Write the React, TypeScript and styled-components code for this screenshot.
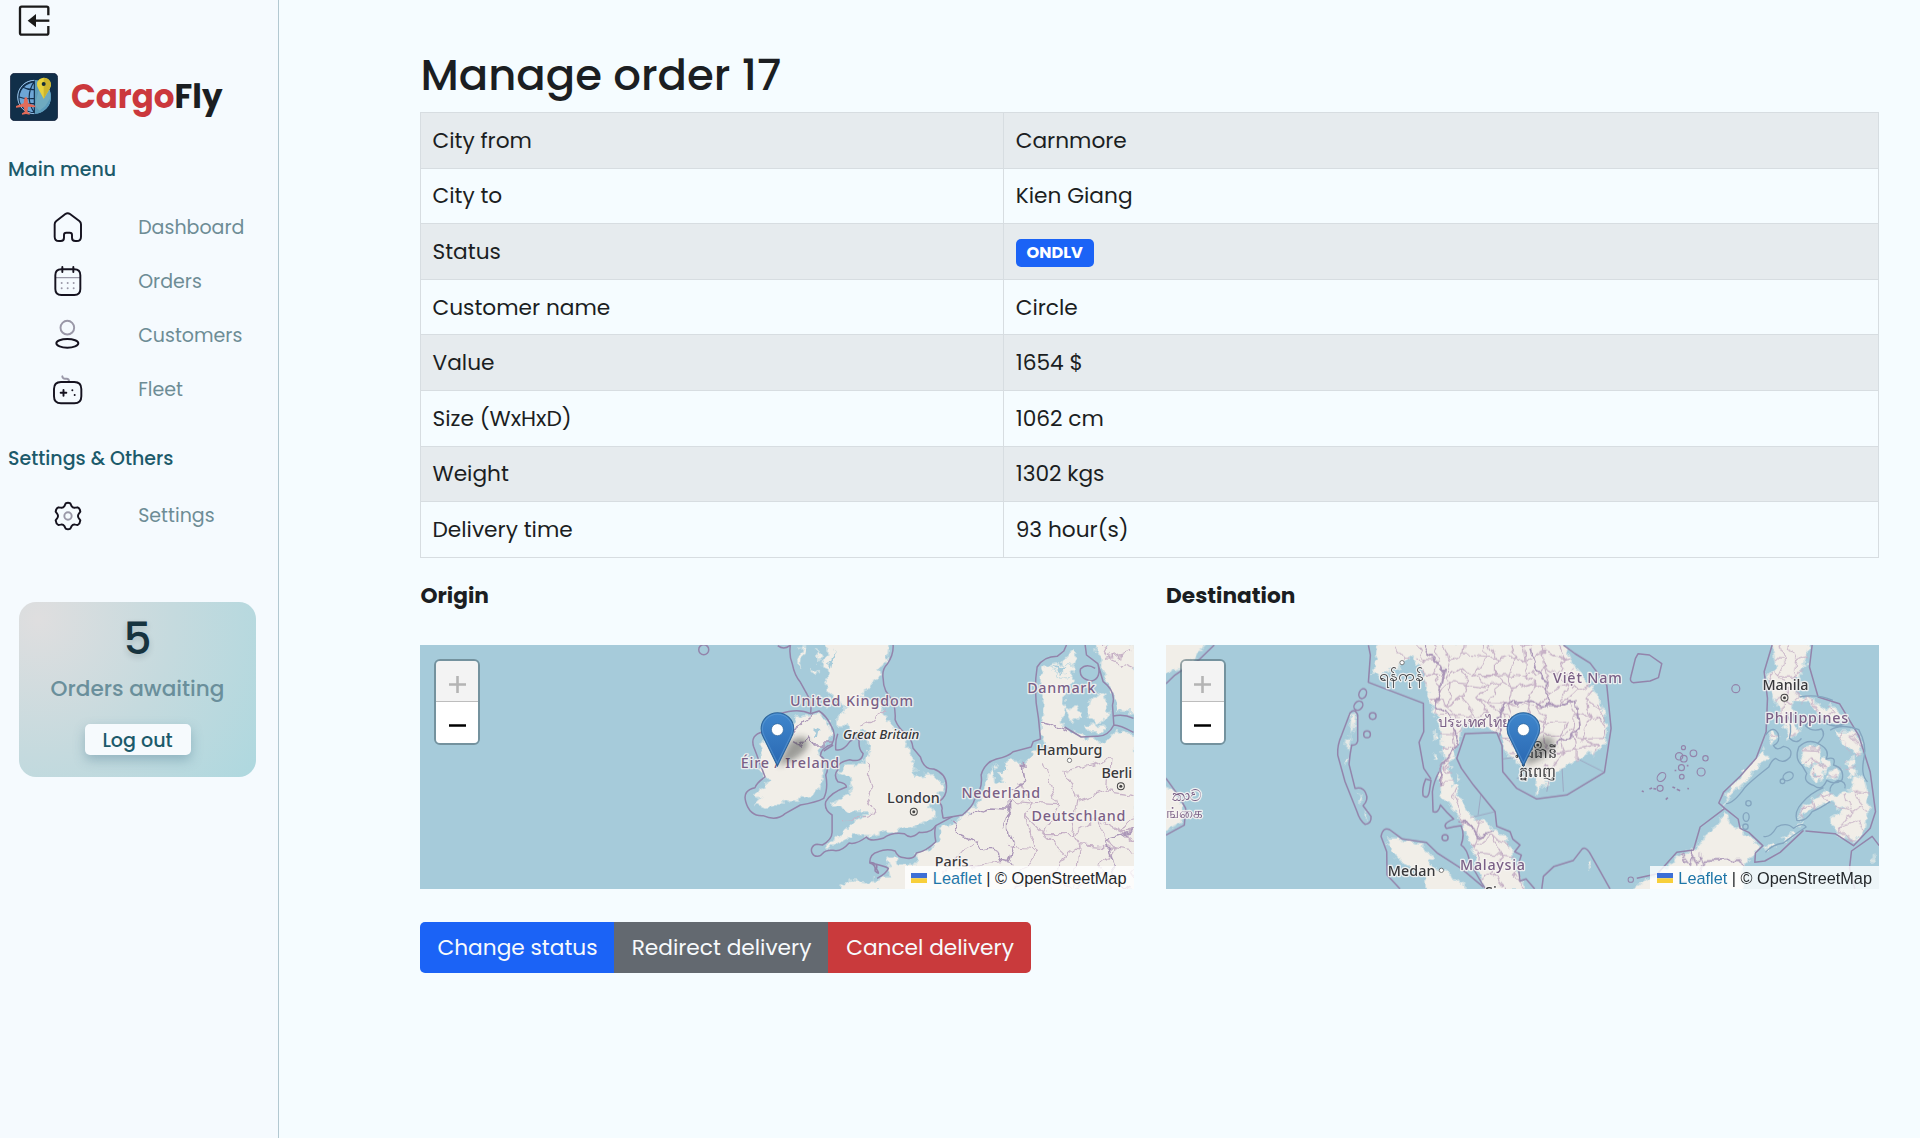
import React from "react";
import styled, { createGlobalStyle } from "styled-components";

const GlobalStyle = createGlobalStyle`
  *, *::before, *::after { box-sizing: border-box; }
  body {
    margin: 0;
    background: #f5fcff;
    color: #1b1e22;
    font-family: "Poppins", "Inter", "Noto Sans", sans-serif;
    font-size: 21.7px;
    line-height: 1.5;
  }
`;

const Shell = styled.div`
  display: flex;
  min-height: 1138px;
`;

/* ---------- sidebar ---------- */

const Sidebar = styled.aside`
  width: 279px;
  flex: none;
  display: flex;
  flex-direction: column;
  background: #f5fafe;
  border-right: 1px solid #b3c8d1;
`;

const Toggle = styled.button`
  display: flex;
  width: 36px;
  height: 42px;
  margin: 0 0 31px 17px;
  padding: 3px 0 0;
  border: 0;
  background: none;
`;

const Brand = styled.div`
  display: flex;
  align-items: center;
  gap: 13px;
  height: 48px;
  padding-left: 10px;
  font-size: 32.5px;
  font-weight: 700;
  line-height: 48px;
  color: #1b1e22;
`;

const BrandAccent = styled.span`
  color: #cb383c;
`;

const SectionLabel = styled.h2<{ $top: number }>`
  margin: ${(p) => p.$top}px 0 16px 8px;
  font-size: 19px;
  font-weight: 500;
  line-height: 28px;
  color: #1c5a6b;
`;

const NavList = styled.nav`
  display: flex;
  flex-direction: column;
`;

const NavLink = styled.a`
  display: flex;
  align-items: center;
  gap: 54.5px;
  height: 54.2px;
  padding-left: 51.7px;
  font-size: 19px;
  color: #6d8c95;
`;

const NavText = styled.span`
  padding-top: 1.5px;
`;

const AwaitingCard = styled.section`
  display: flex;
  flex-direction: column;
  align-items: center;
  width: 237px;
  height: 175px;
  margin: 59px 0 0 19px;
  border-radius: 17px;
  background: radial-gradient(circle at 8% 10%, #dfdedf 0%, #c5dade 50%, #aed8df 100%);
`;

const AwaitingCount = styled.strong`
  margin-top: 7px;
  font-size: 44px;
  font-weight: 500;
  line-height: 60px;
  color: #17343f;
  text-shadow: 0 3px 6px rgba(23, 52, 63, 0.18);
`;

const AwaitingLabel = styled.span`
  margin-top: 4px;
  font-size: 21.6px;
  font-weight: 500;
  line-height: 32px;
  color: #6a8f9b;
`;

const LogoutButton = styled.button`
  margin-top: 19px;
  width: 106px;
  height: 31.5px;
  padding: 1px 0 0;
  border: 0;
  border-radius: 5px;
  background: #f6fafd;
  box-shadow: 0 5px 12px rgba(60, 110, 135, 0.35);
  font: 500 19.1px/31px "Poppins", "Inter", sans-serif;
  color: #1c5a6b;
`;

/* ---------- main ---------- */

const Main = styled.main`
  flex: 1;
  min-width: 0;
  padding: 49px 41px 0 141px;
`;

const Title = styled.h1`
  margin: 0 0 11px 0.5px;
  font-size: 43.4px;
  font-weight: 500;
  line-height: 52px;
`;

const DetailTable = styled.table`
  width: 100%;
  border-collapse: collapse;
  table-layout: fixed;
`;

const DetailRow = styled.tr`
  height: 55.6px;
  &:nth-child(odd) { background: #e6ebee; }
`;

const DetailCell = styled.td<{ $width?: string }>`
  width: ${(p) => p.$width ?? "auto"};
  padding: 1.5px 11px 0 11.5px;
  border: 1px solid #d7dde1;
  color: #1b1e22;
  vertical-align: middle;
`;

const Badge = styled.span`
  display: block;
  width: 78px;
  height: 28px;
  margin-top: 2px;
  border-radius: 5px;
  background: #1b63f6;
  color: #fff;
  font-size: 16.2px;
  font-weight: 700;
  line-height: 28.5px;
  text-align: center;
`;

const MapGrid = styled.div`
  display: grid;
  grid-template-columns: 1fr 1fr;
  gap: 32px;
  margin-top: 22px;
`;

const MapTitle = styled.h3`
  margin: 0 0 33px 0.5px;
  font-size: 21.7px;
  font-weight: 700;
  line-height: 32px;
`;

const MapFrame = styled.div`
  position: relative;
  height: 244px;
  overflow: hidden;
  background: #a6cbda;
`;

const MapCanvas = styled.svg`
  display: block;
  width: 100%;
  height: 100%;
`;

const ZoomControl = styled.div`
  position: absolute;
  top: 14px;
  left: 14px;
  width: 46px;
  height: 86.5px;
  border: 2.5px solid rgba(80, 105, 115, 0.58);
  border-radius: 6px;
  overflow: hidden;
`;

const ZoomButton = styled.button<{ $disabled?: boolean }>`
  display: grid;
  place-items: center;
  width: 100%;
  height: 41px;
  padding: 7px 0 0;
  border: 0;
  border-bottom: ${(p) => (p.$disabled ? "1px solid #bdbdbd" : "0")};
  background: ${(p) => (p.$disabled ? "#f3f3f3" : "#fff")};
  color: ${(p) => (p.$disabled ? "#b4b4b4" : "#000")};
`;

const Attribution = styled.div`
  position: absolute;
  right: 0;
  bottom: 0;
  display: flex;
  align-items: center;
  height: 23px;
  padding: 1px 7px 0 6.5px;
  background: rgba(255, 255, 255, 0.8);
  font: 16.3px/22px "Liberation Sans", Arial, sans-serif;
  color: #24282b;
  white-space: pre;
`;

const LeafletLink = styled.a`
  display: flex;
  align-items: center;
  gap: 5.5px;
  color: #1f76a8;
`;

const ButtonGroup = styled.div`
  display: inline-flex;
  height: 51px;
  margin-top: 33px;
  border-radius: 5px;
  overflow: hidden;
`;

const ActionButton = styled.button<{ $color: string; $width: number }>`
  width: ${(p) => p.$width}px;
  padding: 0 0 0 1px;
  border: 0;
  background: ${(p) => p.$color};
  color: #f7fafc;
  font: 400 21.7px/51px "Poppins", "Inter", sans-serif;
`;

/* ---------- icons ---------- */

const INK = "#15121f";
const MUTED = "#9a98a8";

const NavIcon = ({ top, children }: { top: number; children: React.ReactNode }) => (
  <svg width="32" height="32" viewBox={`156 ${top} 96 96`} fill="none" stroke={INK} strokeWidth="5.800" strokeLinecap="round" strokeLinejoin="round">
    {children}
  </svg>
);

const HomeIcon = () => (
  <NavIcon top={61}>
    <path d="M164 101q0-6 5-10l27-21q7-5 14 0l28 21q5 4 5 10v37q0 13-13 13h-4q-10 0-10-10v-8q0-7-7-7h-10q-7 0-7 7v8q0 10-10 10h-5q-13 0-13-13z" />
  </NavIcon>
);

const CalendarIcon = () => (
  <NavIcon top={224}>
    <path d="M168 262h73" stroke={MUTED} strokeWidth="4" />
    <path d="M184 237h39q18 0 18 18v41q0 18-18 18h-39q-18 0-18-18v-41q0-18 18-18zM187 230v15M220 230v15" />
    <path d="M185 278h.1M203 278h.1M221 278h.1M185 294h.1M203 294h.1M221 294h.1" stroke={MUTED} />
  </NavIcon>
);

const UserIcon = () => (
  <NavIcon top={387}>
    <circle cx="202" cy="413" r="20.5" stroke={MUTED} />
    <ellipse cx="202" cy="460" rx="33" ry="13" />
  </NavIcon>
);

const FleetIcon = () => (
  <NavIcon top={550}>
    <path d="M187 557q1 7 8 7h5q7 0 7 8" stroke={MUTED} />
    <path d="M183 574h40q21 0 21 21v22q0 21-21 21h-40q-21 0-21-21v-22q0-21 21-21zM182 606h17M190.500 598v17M217 599h.1M224 613h.1" />
  </NavIcon>
);

const SettingsIcon = () => (
  <NavIcon top={928}>
    <circle cx="204" cy="976" r="11" stroke={MUTED} />
    <path d="M197 938q7-4 14 0l4 9q4 6 11 4l7-1q7 3 8 13l-5 7q-4 6 0 12l5 7q-1 10-8 14l-7-1q-7-2-11 4l-4 8q-7 4-14 0l-4-8q-4-6-11-4l-7 1q-7-4-8-14l5-7q4-6 0-12l-5-7q1-10 8-13l7 1q7 2 11-4z" />
  </NavIcon>
);

const ToggleIcon = () => (
  <svg width="34" height="34" viewBox="51 9 102 102" fill="none" stroke="#1a1a1a" strokeWidth="7">
    <path d="M145 46V25q0-5-5-5H65q-5 0-5 5v74q0 5 5 5h75q5 0 5-5V78" />
    <path d="M104 62h44" />
    <path d="M83 62l25-20v40z" fill="#1a1a1a" stroke="none" />
  </svg>
);

const LogoIcon = () => (
  <svg width="48" height="48" viewBox="30 217 144 144">
    <rect x="31" y="218" width="142" height="142" rx="13" fill="#112f49" stroke="#0b1530" strokeWidth="2" />
    <circle cx="103" cy="289" r="50" fill="#6ea6d6" />
    <path d="M103 239a50 50 0 0 1 0 100z" fill="#5d9dbb" />
    <path d="M118 262l14 10 18-4v26l-14 22-18 14-12-14 4-24z" fill="#78afc0" opacity=".7" />
    <g fill="none" stroke="#122f4c" strokeWidth="3.500">
      <path d="M103 242a47 47 0 0 0 0 94M103 242q-31 47 0 94M103 242q-60 15-42 76M103 239v100M66 258q17 10 37 9M55 288q22 9 48 5M62 316q18-9 41-7" />
    </g>
    <path d="M103 239a50 50 0 0 0 0 100" fill="none" stroke="#93bce0" strokeWidth="3" />
    <path d="M131 294l-16-30q-10-17 3-28 13-9 27 0 13 11 5 27z" fill="#e8d23e" />
    <path d="M131 294v-63q14 0 20 13 3 9-2 20z" fill="#cdb52f" />
    <circle cx="131" cy="250" r="6" fill="#152d38" />
    <path d="M78 289q4 0 5 9l1 10 22 7v5l-22-2-2 15 7 5v4l-11-2-12 2v-4l8-5-3-15-23 3v-5l23-8 1-10q2-9 6-9z" fill="#e26b59" />
  </svg>
);

const Flag = () => (
  <svg width="16" height="10.500" viewBox="0 0 16 10.5">
    <path d="M0 0h16v5.250H0z" fill="#3d6fd6" />
    <path d="M0 5.250h16v5.250H0z" fill="#f8cf3a" />
  </svg>
);

/* ---------- maps ---------- */

const BORDER = "#9384ab";
const PROVINCE = "#c6b1c6";
const LAND = "#f1eee8";

/* Irregular administrative mesh, drawn inside a clip of the land outline. */
function mesh(x0: number, y0: number, x1: number, y1: number, step: number): string {
  const hash = (i: number, j: number, k: number) => {
    const s = Math.sin(i * 127.1 + j * 311.7 + k * 74.7) * 43758.5453;
    return s - Math.floor(s);
  };
  const point = (i: number, j: number) => [
    Math.round(x0 + (i + (j % 2) * 0.5) * step + (hash(i, j, 1) - 0.5) * step * 0.8),
    Math.round(y0 + j * step + (hash(i, j, 2) - 0.5) * step * 0.8),
  ];
  let d = "";
  for (let i = -1; x0 + i * step < x1; i++) {
    for (let j = 0; y0 + j * step < y1; j++) {
      const [ax, ay] = point(i, j);
      const [bx, by] = point(i + 1, j);
      const [cx, cy] = point(i, j + 1);
      if (hash(i, j, 3) > 0.14) d += `M${ax} ${ay}L${bx} ${by}`;
      if (hash(i, j, 4) > 0.14) d += `M${ax} ${ay}L${cx} ${cy}`;
    }
  }
  return d;
}

const RoughFilter = ({ id, scale, frequency }: { id: string; scale: number; frequency: number }) => (
  <filter id={id} x="-5%" y="-5%" width="110%" height="110%" colorInterpolationFilters="sRGB">
    <feTurbulence type="fractalNoise" baseFrequency={frequency} numOctaves="2" seed="4" />
    <feDisplacementMap in="SourceGraphic" scale={scale} xChannelSelector="R" yChannelSelector="G" />
  </filter>
);

type LabelProps = {
  x: number;
  y: number;
  w?: number;
  tone?: "country" | "city" | "island";
  size?: number;
  anchor?: "start" | "end";
  children: string;
};

const Label = ({ x, y, w, tone = "country", size = 43, anchor = "start", children }: LabelProps) => (
  <text
    x={x}
    y={y}
    textLength={w}
    textAnchor={anchor}
    fontFamily="'Noto Sans', 'DejaVu Sans', sans-serif"
    fontSize={size}
    fontWeight={500}
    fontStyle={tone === "island" ? "italic" : "normal"}
    fill={tone === "country" ? "#7a5f86" : "#38383b"}
    stroke="#f7f4f2"
    strokeOpacity="0.85"
    strokeWidth="8"
    strokeLinejoin="round"
    paintOrder="stroke"
  >
    {children}
  </text>
);

const Capital = ({ x, y }: { x: number; y: number }) => (
  <g>
    <circle cx={x} cy={y} r="10.500" fill="#f1eee8" stroke="#444" strokeWidth="3" />
    <circle cx={x} cy={y} r="4.500" fill="#444" />
  </g>
);

const Town = ({ x, y }: { x: number; y: number }) => (
  <circle cx={x} cy={y} r="6.500" fill="#fff" stroke="#666" strokeWidth="2.500" />
);

const Pin = ({ x, id }: { x: number; id: string }) => (
  <g transform={`translate(${x} 393)`}>
    <defs>
      <linearGradient id={id} x1="0" y1="0" x2="0" y2="1">
        <stop offset="0" stopColor="#3f86cc" />
        <stop offset="1" stopColor="#2a68b2" />
      </linearGradient>
      <filter id={`${id}-blur`} x="-40%" y="-40%" width="180%" height="180%">
        <feGaussianBlur stdDeviation="10" />
      </filter>
    </defs>
    <path d="M0 0L30-62Q52-96 84-84 104-70 80-42 52-14 0 0z" fill="#1c2024" opacity=".4" filter={`url(#${id}-blur)`} />
    <path d="M0 0L-41-84Q-49-98-49-112A49 48 0 0 1 49-112Q49-98 41-84z" fill={`url(#${id})`} stroke="#2d6499" strokeWidth="3" />
    <path d="M0-9L-37-85Q-45-99-45-111A45 44 0 0 1 45-111Q45-99 37-85z" fill="none" stroke="#6aa5dc" strokeOpacity=".5" strokeWidth="3" />
    <circle cx="0" cy="-109" r="18" fill="#fff" stroke="#2d6499" strokeWidth="2" />
  </g>
);

const BRITAIN =
  "M170 20H358L353 70 325 120 290 165 262 188 312 190 335 215 350 245 372 285 402 310 416 345 430 385 442 405 438 424 490 418 520 450 510 490 478 515 502 542 480 557 440 572 400 580 374 590 350 588 305 602 255 598 232 612 205 624 180 642 170 632 200 606 240 570 272 545 300 541 290 530 242 530 195 517 186 505 218 485 246 465 238 430 213 408 228 390 270 392 286 380 297 350 290 310 300 292 275 282 248 300 234 275 200 270 206 240 228 215 200 190 178 172 166 140 180 112 158 92 172 62z";
const IRELAND =
  "M105 240L150 236 180 275 185 300 160 330 145 345 155 380 158 430 150 465 120 480 70 497 30 507-10 522-45 510-25 490-48 478-10 450 0 432-20 420-30 398-25 362-30 330-20 316 15 320 50 300 65 260z";
const EUROPE =
  "M212 770L215 748 240 735 290 742 342 727 365 726 350 666 380 666 386 690 440 686 445 655 490 636 512 608 506 580 550 566 600 530 640 490 655 412 672 398 674 440 702 442 680 392 720 378 762 380 800 345 832 340 812 295 818 250 820 200 810 130 825 95 870 86 912 42 925 60 905 100 912 130 888 160 886 200 882 232 868 258 905 290 960 312 1000 320 1050 288 1100 300V770z";
const DENMARK_ISLES =
  "M888 220L922 210 938 245 908 265zM955 200L1005 170 1018 238 980 268 950 238zM945 275L1000 270 1010 290 960 290zM840 92L905 92 912 126 870 130z";
const SWEDEN = "M972 20H1100V232L1040 226 1028 180 1012 130 990 82z";

const OriginMap = () => (
  <MapCanvas viewBox="-1049 30 2140 732" preserveAspectRatio="none">
    <defs>
      <RoughFilter id="rough-eu" scale={34} frequency={0.045} />
      <RoughFilter id="rough-eu-line" scale={36} frequency={0.03} />
      <clipPath id="de"><path d="M720 470L800 400 1100 300V770H700z" /></clipPath>
    </defs>
    <g filter="url(#rough-eu)">
      <g fill={LAND} stroke="#c9dde2" strokeWidth="4">
        <path d={BRITAIN} /><path d={IRELAND} /><path d={EUROPE} /><path d={DENMARK_ISLES} /><path d={SWEDEN} />
        <path d="M95 35l10 4-6 40-12 20-2-30zM120 100l30 15-18 12zM140 40l20 30-14 16zM175 186l14 24-20 6z" />
      </g>
      <g fill="#a6cbda">
        <path d="M135 280l14 4-4 20-12 2zM690 380l22 6-8 34-26-4zM195 40l-20 50 8 8zM850 96l40 6-20 14z" />
      </g>
    </g>
    <g fill="none" stroke={PROVINCE} strokeWidth="3.500" filter="url(#rough-eu-line)">
      <path d={mesh(740, 400, 1100, 770, 86)} clipPath="url(#de)" />
      <path d="M1000 30l20 40 70 30M1010 70l80-20M345 222L300 262 272 282M300 380l-4 40 10 40-14 30 20 40-14 20-90 4M630 620l-70 40-40 60M560 700l140-20" />
    </g>
    <g fill="none" stroke="#ab97b8" strokeWidth="4.500" strokeLinejoin="round" filter="url(#rough-eu-line)">
      <path d="M550 560l14 34 40 18 26 34 40-6 20 36 40 10M600 540l60-24 58 4-2 60 18 44-18 60M760 385l8 50-52 40 4 50-20 50M810 260l90 28M1091 590l-80 26 14 60 20 70 34 16M75 300l20-36 34-30M70 320l24 14 20-28 20 24 46 0" />
    </g>
    <g fill="none" stroke={BORDER} strokeWidth="4.500" strokeLinejoin="round">
      <path d="M24 32q18 14 36 0M62 30Q57 60 68 88 74 120 92 142L112 178Q128 205 122 236M370 30Q372 60 352 88 336 104 340 130 340 150 348 168L370 200Q378 225 376 254 386 280 408 296 426 310 430 340L452 366Q462 404 492 402 530 416 530 452 532 484 508 500 520 514 516 526L520 550" />
      <path d="M548 545L498 572Q492 590 498 620 470 648 440 654 432 676 404 668 384 668 376 648 350 640 326 650 300 656 300 682 326 684 320 702 334 724 316 708 320 690 300 684 344 692 356 700 350 716 322 730 318 704M338 648l-2 36M300 706Q270 704 258 714 214 714 202 730 182 740 188 762" />
      <path d="M498 572Q484 596 448 592 424 616 404 596 366 590 340 610 300 622 290 606 258 630 238 624 214 652 190 646 168 644 158 656A18 18 0 1 1 142 628L158 630Q188 612 187 590L187 540Q162 524 168 500 184 472 230 456 230 444 204 440 190 420 204 404 200 382 240 374 276 384 280 356 266 344 268 318 262 300 240 320 220 350 198 344 196 316 204 296M190 330L162 348" />
      <path d="M122 236Q86 218 30 236 0 256-20 290-60 300-48 336-40 356-30 384-24 400-14 426-40 444-44 458-82 466-72 500-60 544-20 542 20 560 46 536L92 510Q140 502 162 490 176 462 168 420 184 388 152 362 152 340 186 328 202 300 184 272 170 242 148 228z" />
      <path d="M520 550L578 540Q610 514 614 494 640 458 634 420 644 382 680 372 716 364 730 350L784 336 790 320 812 312 806 250Q790 170 802 96 822 64 862 64L882 48 890 30M946 30L950 60 984 86Q996 130 966 138 926 132 932 102 950 84 976 100M984 86L1000 140Q1040 170 1028 210L1032 270Q1014 306 980 304L934 306 884 276M1028 244Q1060 236 1091 250M1091 292Q1050 270 1032 270" />
      <circle cx="-198" cy="44" r="15" />
    </g>
    <Capital x={432} y={530} /><Capital x={1053} y={454} /><Town x={899} y={376} />
    <Label x={61} y={213} w={369}>United Kingdom</Label>
    <Label x={-87} y={400} w={295}>Éire / Ireland</Label>
    <Label x={220} y={311} w={229} tone="island" size={40}>Great Britain</Label>
    <Label x={352} y={505} w={158} tone="city">London</Label>
    <Label x={772} y={174} w={204}>Danmark</Label>
    <Label x={800} y={359} w={198} tone="city">Hamburg</Label>
    <Label x={995} y={430} tone="city" w={92}>Berli</Label>
    <Label x={575} y={489} w={236}>Nederland</Label>
    <Label x={785} y={558} w={282}>Deutschland</Label>
    <Label x={495} y={697} w={101} tone="city">Paris</Label>
    <Pin x={23} id="pin-origin" />
  </MapCanvas>
);

const INDOCHINA =
  "M-155 20L-162 70-175 118-130 112-108 100-50 62-25 105-8 180 30 270 36 330 42 370 26 430 30 490 68 512 92 560 110 600 132 660 142 700 168 770H290L252 690 246 640 216 600 190 588 170 562 120 548 96 500 80 458 62 420 56 390 78 340 92 310 96 272 150 270 190 290 214 300 226 350 250 372 280 395 320 420 315 475 345 452 372 420 420 385 480 358 522 330 530 280 520 220 482 150 432 92 396 20z";
const SUMATRA = "M-130 612L-82 614-28 628 8 668 0 690 50 712 90 742 120 770H-10L-18 722-60 700-106 662z";
const BORNEO =
  "M350 770L400 744 480 690 510 655 560 640 592 590 626 568 642 530 655 560 690 580 704 605 750 630 722 668 700 690V770z";
const LUZON =
  "M785 20H895L888 80 868 122 850 132 862 176 905 192 950 226 966 206 1004 250 980 262 925 240 890 200 850 196 846 240 870 290 836 312 820 262 790 180 770 130 796 96z";
const VISAYAS =
  "M975 288L1038 288 1056 350 1040 366 1010 338zM870 340L925 332 934 386 880 392zM895 405L945 368 960 384 925 445zM960 404L990 400 980 428 950 425zM1008 380L1030 370 1036 420 1016 425zM775 290L806 300 786 326z";
const MINDANAO =
  "M975 482L1025 465 1036 420 1062 430 1078 500 1066 580 1036 622 980 596 962 550 1000 526 960 500 900 524 866 552 880 512 945 468z";
const PALAWAN = "M640 512L655 468 732 376 760 340 772 366 700 446 652 494z";

const DestinationMap = () => (
  <MapCanvas viewBox="33 30 2140 732" preserveAspectRatio="none">
    <defs>
      <RoughFilter id="rough-asia" scale={30} frequency={0.045} />
      <RoughFilter id="rough-asia-line" scale={30} frequency={0.035} />
      <clipPath id="clip-indochina"><path d={INDOCHINA} /></clipPath>
      <clipPath id="clip-phil"><path d={LUZON + MINDANAO + VISAYAS} /></clipPath>
    </defs>

    <g fill={LAND} stroke="#c9dde2" strokeWidth="4" filter="url(#rough-asia)">
      <path d="M0 0H175L110 76 76 104 0 125zM0 430L58 468 84 520 76 562 0 606z" />
      <path d="M590 238l12-2-6 50-8 14zM580 304l8 4-6 34-8-2zM570 366l10-2-2 22-8 2zM614 484l12 4-8 14zM628 535l10 6-6 14z" />
      <g transform="translate(825 0)">
        <path d={INDOCHINA} /><path d={SUMATRA} />
        <path d="M468 682l10-4 2 20-8 4zM12 280l12 30-8 10zM10 350l8 20-8 4zM82 420l14 4-10 14z" />
      </g>
      <g transform="translate(1065 0)">
        <path d={BORNEO} /><path d={LUZON} /><path d={VISAYAS} /><path d={MINDANAO} /><path d={PALAWAN} />
        <path d="M820 610l24-14 6 8-22 14zM766 640l22-12 4 8-20 12zM854 572l22-10-4 14zM1090 660l6 20-8 4z" />
      </g>
    </g>

    <g transform="translate(825 0)">
      <g fill="none" filter="url(#rough-asia-line)">
        <g clipPath="url(#clip-indochina)">
          <path d={mesh(-40, 20, 560, 480, 46)} stroke={PROVINCE} strokeWidth="3.500" />
          <path d={mesh(20, 500, 300, 770, 58)} stroke={PROVINCE} strokeWidth="3.500" />
        </g>
        <path d="M-20 30L10 80 42 100 30 160 20 210 60 250 80 300 76 340 30 400 34 450M220 215L232 202 300 198 350 215 352 150 320 100 300 40M352 210L400 212 440 195 450 280 420 310 380 320 370 360M82 556L120 570 140 604 190 590M220 215L200 250 214 300" stroke="#ab97b8" strokeWidth="5.500" />
      </g>
    </g>
    <g transform="translate(1065 0)">
      <g fill="none" filter="url(#rough-asia-line)">
        <path d={mesh(760, 20, 1100, 640, 46)} stroke={PROVINCE} strokeWidth="3.500" clipPath="url(#clip-phil)" />
        <path d="M510 655l30 40 6-44 16 40 6-30 10 20M700 690L690 672 584 676 570 720 500 740" stroke="#ab97b8" strokeWidth="5" />
      </g>
    </g>

    <g fill="none" stroke={BORDER} strokeWidth="4.500" strokeLinejoin="round">
      <path d="M33 146L60 120 90 100 130 76 178 30M33 430L72 484 92 520 88 570 33 600M640 30L646 60 640 142 805 205 806 290 792 322 806 400 828 432" />
      <path d="M585 234Q600 218 608 240L608 318Q604 332 590 330 584 360 582 388L600 460Q624 454 632 474 642 494 624 512L648 544Q650 566 630 568 614 556 606 530L570 440 548 360Q546 330 560 300z" />
      <path d="M985 756L918 700 848 655 814 622 742 612 704 584Q684 574 678 604L695 650 696 720 735 762" />
      <path d="M812 432Q800 460 804 482 820 496 824 462L828 436zM852 410Q836 440 832 470L834 530Q850 536 856 510 874 532 896 552 860 566 874 580 900 574 918 572 930 600 918 630 936 640 944 680 976 740 992 762" />
      <ellipse cx="623" cy="176" rx="11" ry="15" transform="rotate(20 623 176)" />
      <ellipse cx="610" cy="212" rx="12" ry="15" transform="rotate(40 610 212)" />
      <circle cx="653" cy="243" r="10" /><circle cx="636" cy="298" r="10" /><circle cx="870" cy="608" r="9" />
      <g transform="translate(825 0)">
        <path d="M400 30L435 56 480 84 530 150 543 280 523 412 410 480 320 492 260 460 218 410 216 332 200 292 105 296 80 370 94 400 130 450 195 530 200 574 240 590 248 612 270 630 254 650 274 660 264 690 270 738 288 732 314 762" />
        <path d="M335 762L340 724 372 694 430 676 456 642Q466 634 478 652L512 712 540 762" />
        <path d="M216 372L260 366M260 430L300 420M350 470L358 430M400 470L396 400M523 412L440 370M195 530L120 548M152 480L144 540" strokeWidth="2.500" strokeOpacity=".6" />
      </g>
      <g transform="translate(1065 0)">
        <path d="M384 56L418 60 455 86 445 128 420 138 370 143Q358 140 362 126L376 70zM786 30L762 110 772 190 768 290 738 370 690 424 640 472 626 504 644 520 570 576 550 645 500 652 442 716 380 730M644 520L684 552 690 580 716 592 758 632 736 654 734 682 764 678 810 652 880 586M906 30L898 96 924 186 988 206 1046 302 1080 410 1096 530 1080 580 1030 632 975 596 886 588M1107 632L1086 604 1024 648 1018 700 1034 762" />
        <g strokeWidth="3.500">
          <circle cx="677" cy="161" r="12" /><circle cx="550" cy="355" r="10" /><circle cx="586" cy="370" r="8" /><circle cx="573" cy="411" r="12" />
          <circle cx="507" cy="364" r="11" /><circle cx="521" cy="371" r="10" /><circle cx="520" cy="338" r="6" /><circle cx="514" cy="398" r="9" /><circle cx="515" cy="425" r="7" /><circle cx="450" cy="460" r="9" />
          <ellipse cx="454" cy="426" rx="15" ry="11" transform="rotate(-50 454 426)" />
          <path d="M395 468l6 2M418 462l8-3M430 461l8 1M487 456l8 3M500 463l10 4M532 460l4 2M467 494l6-6M496 404v5M530 392h5" strokeWidth="5" />
        </g>
        <g strokeWidth="4" stroke="#84a5bf">
          <path d="M766 300Q790 268 804 296 812 320 790 332 800 350 820 334 850 340 840 366 820 390 796 370 784 376 776 396 720 440 704 458 670 506 648 506M876 392Q852 372 866 336 896 306 932 330 960 346 948 372 980 362 970 390 1004 400 996 434 976 452 950 436 936 470 912 452 876 440 890 416zM960 286Q990 264 1046 284 1070 330 1062 366 1050 420 1072 440M830 236Q848 272 838 310 860 330 874 310M868 186Q920 176 968 196M1010 262Q976 284 944 262 900 250 886 272 906 292 934 282 950 300 924 324M960 470Q956 450 984 436 1010 440 1004 460M960 500Q930 520 906 530 886 562 860 556 852 530 874 506 900 474 940 458M760 604Q780 610 800 576 830 560 850 580 880 560 888 576 850 600 820 624 784 630 766 652" />
          <ellipse cx="834" cy="424" rx="16" ry="12" transform="rotate(-30 834 424)" /><circle cx="817" cy="439" r="7" /><circle cx="715" cy="505" r="8" /><ellipse cx="708" cy="546" rx="9" ry="13" /><circle cx="706" cy="575" r="8" />
        </g>
      </g>
      <circle cx="1427" cy="734" r="8" strokeWidth="3" />
    </g>

    <Town x={741} y={83} /><Town x={859} y={706} /><Capital x={1148} y={330} /><Capital x={1888} y={188} />
    <Label x={807} y={137} tone="city" size={49} anchor="end">ရန်ကုန်</Label>
    <Label x={848} y={277} size={43}>ประเทศไทย</Label>
    <Label x={1194} y={145} w={206}>Việt Nam</Label>
    <Label x={1207} y={370} tone="city" size={43} anchor="end">រាជធានី</Label>
    <Label x={1202} y={427} tone="city" size={44} anchor="end">ភ្នំពេញ</Label>
    <Label x={140} y={498} size={48} anchor="end">කාව</Label>
    <Label x={145} y={550} size={44} anchor="end">ங்கை</Label>
    <Label x={698} y={723} w={143} tone="city">Medan</Label>
    <Label x={915} y={705} w={195}>Malaysia</Label>
    <Label x={990} y={786} tone="city">Sin</Label>
    <Label x={1822} y={165} w={138} tone="city">Manila</Label>
    <Label x={1830} y={265} w={249}>Philippines</Label>
    <Pin x={1105} id="pin-destination" />
  </MapCanvas>
);

const MapPanel = ({ title, children }: { title: string; children: React.ReactNode }) => (
  <section>
    <MapTitle>{title}</MapTitle>
    <MapFrame>
      {children}
      <ZoomControl>
        <ZoomButton $disabled aria-label="Zoom in">
          <svg width="17" height="17" viewBox="0 0 17 17" stroke="currentColor" strokeWidth="2.600"><path d="M0 8.500h17M8.500 0v17" /></svg>
        </ZoomButton>
        <ZoomButton aria-label="Zoom out">
          <svg width="17" height="17" viewBox="0 0 17 17" stroke="currentColor" strokeWidth="2.600"><path d="M0 8.500h17" /></svg>
        </ZoomButton>
      </ZoomControl>
      <Attribution>
        <LeafletLink><Flag />Leaflet</LeafletLink>
        <span> | © OpenStreetMap</span>
      </Attribution>
    </MapFrame>
  </section>
);

/* ---------- page ---------- */

const NAV = [
  { label: "Dashboard", Icon: HomeIcon },
  { label: "Orders", Icon: CalendarIcon },
  { label: "Customers", Icon: UserIcon },
  { label: "Fleet", Icon: FleetIcon },
];

const DETAILS: [string, React.ReactNode][] = [
  ["City from", "Carnmore"],
  ["City to", "Kien Giang"],
  ["Status", <Badge key="status">ONDLV</Badge>],
  ["Customer name", "Circle"],
  ["Value", "1654 $"],
  ["Size (WxHxD)", "1062 cm"],
  ["Weight", "1302 kgs"],
  ["Delivery time", "93 hour(s)"],
];

export default function App() {
  return (
    <>
      <GlobalStyle />
      <Shell>
        <Sidebar>
          <Toggle aria-label="Collapse menu"><ToggleIcon /></Toggle>
          <Brand>
            <LogoIcon />
            <span><BrandAccent>Cargo</BrandAccent>Fly</span>
          </Brand>
          <SectionLabel $top={35}>Main menu</SectionLabel>
          <NavList>
            {NAV.map(({ label, Icon }) => (
              <NavLink key={label}><Icon /><NavText>{label}</NavText></NavLink>
            ))}
          </NavList>
          <SectionLabel $top={28}>Settings &amp; Others</SectionLabel>
          <NavList>
            <NavLink><SettingsIcon /><NavText>Settings</NavText></NavLink>
          </NavList>
          <AwaitingCard>
            <AwaitingCount>5</AwaitingCount>
            <AwaitingLabel>Orders awaiting</AwaitingLabel>
            <LogoutButton>Log out</LogoutButton>
          </AwaitingCard>
        </Sidebar>
        <Main>
          <Title>Manage order 17</Title>
          <DetailTable>
            <tbody>
              {DETAILS.map(([name, value]) => (
                <DetailRow key={name}>
                  <DetailCell $width="40%">{name}</DetailCell>
                  <DetailCell>{value}</DetailCell>
                </DetailRow>
              ))}
            </tbody>
          </DetailTable>
          <MapGrid>
            <MapPanel title="Origin"><OriginMap /></MapPanel>
            <MapPanel title="Destination"><DestinationMap /></MapPanel>
          </MapGrid>
          <ButtonGroup>
            <ActionButton $color="#1b63f6" $width={194}>Change status</ActionButton>
            <ActionButton $color="#636970" $width={214}>Redirect delivery</ActionButton>
            <ActionButton $color="#c93a3c" $width={203}>Cancel delivery</ActionButton>
          </ButtonGroup>
        </Main>
      </Shell>
    </>
  );
}
